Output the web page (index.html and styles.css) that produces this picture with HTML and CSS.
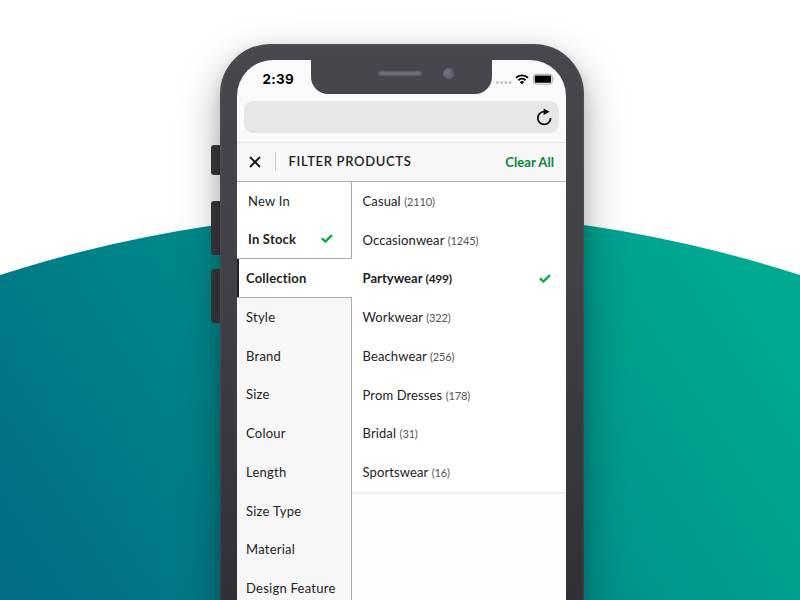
FILE: index.html
```html
<!DOCTYPE html>
<html lang="en">
<head>
<meta charset="utf-8">
<title>Filter Products</title>
<link rel="stylesheet" href="styles.css">
</head>
<body>
<main class="scene">
  <svg class="backdrop" width="800" height="600" viewBox="0 0 800 600" aria-hidden="true">
    <defs>
      <linearGradient id="teal" gradientUnits="userSpaceOnUse" x1="80" y1="660" x2="720" y2="230">
        <stop offset="0" stop-color="#006f84"/>
        <stop offset="1" stop-color="#00aa91"/>
      </linearGradient>
    </defs>
    <circle cx="400" cy="1512" r="1300" fill="url(#teal)"/>
  </svg>
  <div class="phone">
    <i class="side-button mute"></i>
    <i class="side-button vol-up"></i>
    <i class="side-button vol-down"></i>
    <div class="body">
      <div class="notch"><i class="speaker"></i><i class="camera"></i></div>
      <div class="screen">
        <div class="status">
          <span class="time">2:39</span>
          <svg class="indicators" width="60" height="14" viewBox="0 0 60 14" aria-hidden="true">
            <g fill="#c6c6c7"><circle cx="2.3" cy="9.6" r="1.5"/><circle cx="6.6" cy="9.6" r="1.5"/><circle cx="10.9" cy="9.6" r="1.5"/><circle cx="15.2" cy="9.6" r="1.5"/></g>
            <g fill="none" stroke="#000" stroke-width="1.9"><path d="M21 4.7a8.8 8.8 0 0 1 12 0"/><path d="M23.4 7.2a5.4 5.4 0 0 1 7.2 0"/></g>
            <path d="M27 11.2l-2.1-2.2a3 3 0 0 1 4.2 0z"/>
            <rect x="38.4" y="1.3" width="19" height="9.8" rx="2.6" fill="#fff" stroke="#aaa"/>
            <rect x="39.7" y="2.6" width="16.4" height="7.2" rx="1"/>
            <path d="M58.6 4.3q1.4 1.7 0 3.4z" fill="#999"/>
          </svg>
        </div>
        <div class="address">
          <svg width="18" height="20" viewBox="0 0 18 20" aria-hidden="true">
            <path d="M10 4.7A6.4 6.4 0 1 0 15.6 11" fill="none" stroke="#111" stroke-width="1.8"/>
            <path d="M8.6 1.5l6 3.3-6 3.2z"/>
          </svg>
        </div>
        <header class="header">
          <svg class="close" width="12" height="12" viewBox="0 0 12 12" aria-label="Close"><path d="M1 1l10 10M11 1L1 11" stroke="#111" stroke-width="1.8"/></svg>
          <h1>FILTER PRODUCTS</h1>
          <span class="clear">Clear All</span>
        </header>
        <div class="panels">
          <nav class="groups">
            <div class="toggles">
              <div class="group">New In</div>
              <div class="group bold"><span>In Stock</span><svg class="tick" width="12" height="9" viewBox="0 0 12 9"><path d="M1 4.3l3.4 3.2L11 1.2" fill="none" stroke="#00aa40" stroke-width="2.3"/></svg></div>
            </div>
            <div class="group active bold">Collection</div>
            <div class="others">
              <div class="group">Style</div>
              <div class="group">Brand</div>
              <div class="group">Size</div>
              <div class="group">Colour</div>
              <div class="group">Length</div>
              <div class="group">Size Type</div>
              <div class="group">Material</div>
              <div class="group">Design Feature</div>
            </div>
          </nav>
          <section class="values">
            <div class="value"><span>Casual <small>(2110)</small></span></div>
            <div class="value"><span>Occasionwear <small>(1245)</small></span></div>
            <div class="value bold"><span>Partywear <small>(499)</small></span><svg class="tick" width="12" height="9" viewBox="0 0 12 9"><path d="M1 4.3l3.4 3.2L11 1.2" fill="none" stroke="#00aa40" stroke-width="2.3"/></svg></div>
            <div class="value"><span>Workwear <small>(322)</small></span></div>
            <div class="value"><span>Beachwear <small>(256)</small></span></div>
            <div class="value"><span>Prom Dresses <small>(178)</small></span></div>
            <div class="value"><span>Bridal <small>(31)</small></span></div>
            <div class="value"><span>Sportswear <small>(16)</small></span></div>
          </section>
        </div>
      </div>
    </div>
  </div>
</main>
</body>
</html>
```
FILE: styles.css
```css
* { box-sizing: border-box; }
body { margin: 0; background: #fff; font-family: Lato, sans-serif; color: #222; }
.scene { position: relative; width: 800px; height: 600px; overflow: hidden; padding: 44px 0 0 220px; }
.backdrop { position: absolute; left: 0; top: 0; }
.phone { position: relative; width: 363.5px; height: 720px; }
.body {
  position: relative; height: 100%; padding: 16px 17.5px 0 17px;
  border-radius: 50px; background: linear-gradient(#48474d 0, #424147 220px, #313036 560px);
  box-shadow: 0 16px 42px rgba(0,0,0,.34), 0 4px 12px rgba(0,0,0,.1), inset 0 0 2px 1px rgba(95,95,105,.4);
}
.side-button { position: absolute; left: -9.5px; width: 14px; border-radius: 3px; background: #3a393e; }
.mute { top: 101px; height: 30px; }
.vol-up { top: 157px; height: 54px; }
.vol-down { top: 225px; height: 54px; }
.notch {
  position: absolute; z-index: 1; left: 90.5px; top: 14px; width: 181.5px; height: 36px;
  background: #47464c; border-radius: 0 0 17px 17px;
}
.speaker { position: absolute; left: 67px; top: 13px; width: 44px; height: 5px; border-radius: 3px; background: #6b6b7c; border: 1px solid #5a5a68; }
.camera { position: absolute; left: 132.5px; top: 10px; width: 11px; height: 11px; border-radius: 50%; background: radial-gradient(circle at 40% 40%, #777889, #595a6a 60%, #686878); }
.screen { height: 560px; border-radius: 36px 36px 0 0; overflow: hidden; background: #fafafa; }
.status { display: flex; justify-content: space-between; height: 41px; padding: 11px 11px 0 25.5px; }
.time { font: 700 13.4px/16px Inter, sans-serif; letter-spacing: .3px; color: #000; }
.indicators { margin-top: 2px; }
.address { display: flex; align-items: center; justify-content: flex-end; height: 32px; margin: 0 7px; padding: 0 6px 0 0; border-radius: 9px; background: #e5e6e8; }
.header { display: flex; align-items: center; height: 40px; margin-top: 8.5px; padding: 0 12px; background: #f7f7f7; border-top: 1px solid #e2e2e2; border-bottom: 1px solid #b5b5b5; }
.header h1 { margin: 0 auto 0 14px; padding-left: 12.5px; border-left: 1px solid #cfcfcf; font-size: 13px; line-height: 19px; font-weight: 600; letter-spacing: .68px; }
.clear { color: #078536; font-size: 13px; font-weight: 700; letter-spacing: .06px; }
.panels { display: grid; grid-template-columns: 115px 1fr; align-items: start; background: #fdfdfd; }
.group, .value { display: flex; align-items: center; height: 38.75px; font-size: 13px; letter-spacing: .25px; white-space: nowrap; }
.bold { font-weight: 700; letter-spacing: .2px; }
.toggles { height: 77.5px; background: #fff; border-right: 1px solid #aaa; border-bottom: 1px solid #aaa; padding-left: 11px; }
.toggles .group { height: 38.25px; }
.active { background: #fff; border-left: 2px solid #222; padding-left: 7px; height: 38px; }
.others { background: #f7f7f7; border-top: 1px solid #aaa; border-right: 1px solid #aaa; }
.others .group { padding-left: 9px; }
.others .group:first-child { height: 38.25px; }
.values { background: #fff; border-bottom: 2px solid #f0f0f0; }
.value { padding: 0 15px 0 10.5px; letter-spacing: .12px; }
.value small { font-size: 11px; letter-spacing: -.14px; color: #555; }
.value.bold small { font-size: 12px; letter-spacing: -.25px; color: inherit; }
.value.bold { letter-spacing: .05px; }
.tick { margin-left: auto; }
.toggles .tick { margin-right: 18px; }
```
